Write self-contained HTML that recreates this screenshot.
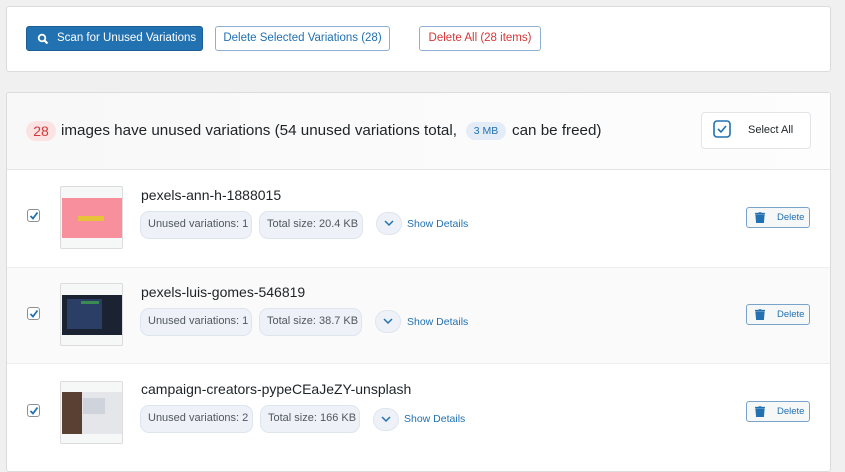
<!DOCTYPE html>
<html><head><meta charset="utf-8"><style>
*{box-sizing:border-box;margin:0;padding:0}
body{width:845px;height:461px;background:#f0f0f1;font-family:"Liberation Sans",sans-serif;position:relative;overflow:hidden;color:#1d2327}
div{white-space:nowrap}
.a{position:absolute}
.panel{background:#fff;border:1px solid #dcdcde;border-radius:3px}
.btn{position:absolute;height:25px;border-radius:3px;font-size:11.5px;line-height:23px;text-align:center}
.pill{position:absolute;height:28px;background:#eef2f8;border:1px solid #dde5ef;border-radius:9px;font-size:11px;color:#50575e;line-height:24px;padding:0 7px}
.chev{position:absolute;width:26px;height:23px;border-radius:12px;background:#eef2f8;border:1px solid #dde5ef}
.sd{position:absolute;font-size:10.5px;color:#2271b1}
.cb{position:absolute;width:13px;height:13px;border:1px solid #8c8f94;border-radius:3px;background:#fff}
.thumb{position:absolute;width:63px;height:63px;background:#f6f7f7;border:1px solid #dcdcde;border-radius:2px}
.title{position:absolute;font-size:14px;color:#1d2327}
.del{position:absolute;width:64px;height:21px;border:1px solid #7aa3cc;border-radius:3px;background:#f6f7f7;font-size:9.5px;color:#2271b1;line-height:20px;padding-left:30px}
</style></head><body>
<div class="a panel" style="left:6px;top:6px;width:825px;height:66px"></div>
<div class="btn" style="left:26px;top:26px;width:177px;background:#2271b1;color:#fff;border:1px solid #1c5f97">
<svg style="position:absolute;left:10px;top:6px" width="12" height="12" viewBox="0 0 12 12"><circle cx="5" cy="5" r="3.3" fill="none" stroke="#fff" stroke-width="1.8"/><path d="M7.3 7.3L10.5 10.5" stroke="#fff" stroke-width="2.2"/></svg>
<span style="position:absolute;left:30px;font-size:11.5px">Scan for Unused Variations</span></div>
<div class="btn" style="left:215px;top:26px;width:175px;border:1px solid #8fb0d3;color:#2271b1;background:#fff;font-size:11.5px">Delete Selected Variations (28)</div>
<div class="btn" style="left:419px;top:26px;width:122px;border:1px solid #8fb0d3;color:#d63638;background:#fff;font-size:11.5px">Delete All (28 items)</div>

<div class="a panel" style="left:6px;top:92px;width:825px;height:380px;overflow:hidden">
<div class="a" style="left:0;top:0;width:825px;height:77px;background:linear-gradient(90deg,#f8f8f8,#fdfdfd);border-bottom:1px solid #e5e5e5"></div>
<div class="a" style="left:0;top:174px;width:825px;height:97px;background:#fafafa;border-top:1px solid #eee;border-bottom:1px solid #eee"></div>
</div>
<div class="a" style="left:26px;top:121px;height:20px;width:30px;background:#fbe3e3;border-radius:10px;color:#d63638;font-size:14px;line-height:20px;text-align:center">28</div>
<div class="a" style="left:61px;top:121px;font-size:15.2px;line-height:20px">images have unused variations (54 unused variations total,</div>
<div class="a" style="left:466px;top:122px;height:18px;width:40px;background:#e4edf7;border-radius:9px;color:#2271b1;font-size:10.5px;line-height:18px;text-align:center">3 MB</div>
<div class="a" style="left:512px;top:121px;font-size:15.2px;line-height:20px">can be freed)</div>
<div class="a" style="left:701px;top:112px;width:110px;height:37px;background:#fff;border:1px solid #e2e4e7;border-radius:4px"></div>
<svg class="a" style="left:713px;top:120px" width="18" height="18" viewBox="0 0 18 18"><rect x="1" y="1" width="16" height="16" rx="3" fill="none" stroke="#2271b1" stroke-width="1.6"/><path d="M5 9l3 3 5-6" fill="none" stroke="#2271b1" stroke-width="1.6"/></svg>
<div class="a" style="left:748px;top:124px;font-size:11px">Select All</div>

<div class="cb" style="left:27px;top:209px"></div><svg class="a" style="left:29px;top:211px" width="10" height="10"><path d="M1.5 5l2.5 2.5 4.5-6" fill="none" stroke="#2271b1" stroke-width="1.8"/></svg>
<div class="thumb" style="left:60px;top:186px"><div class="a" style="left:1px;top:11px;width:60px;height:40px;background:#f7909c"></div><div class="a" style="left:17px;top:29px;width:26px;height:5px;background:#e6c23a"></div></div>
<div class="title" style="left:141px;top:187px">pexels-ann-h-1888015</div>
<div class="pill" style="left:140px;top:211px;width:112px">Unused variations: 1</div>
<div class="pill" style="left:259px;top:211px;width:104px">Total size: 20.4 KB</div>
<div class="chev" style="left:376px;top:212px"></div><svg class="a" style="left:384px;top:219px" width="10" height="8"><path d="M1 2l4 4 4-4" fill="none" stroke="#2271b1" stroke-width="1.5"/></svg>
<div class="sd" style="left:407px;top:218px">Show Details</div>
<div class="del" style="left:746px;top:207px">Delete</div>
<svg class="a" style="left:755px;top:212px" width="10" height="11"><path d="M0 1.5h10M3.5 0h3M1 3h8l-.7 8H1.7z" stroke="#2271b1" fill="#2271b1" stroke-width="1.2"/></svg>

<div class="cb" style="left:27px;top:307px"></div><svg class="a" style="left:29px;top:309px" width="10" height="10"><path d="M1.5 5l2.5 2.5 4.5-6" fill="none" stroke="#2271b1" stroke-width="1.8"/></svg>
<div class="thumb" style="left:60px;top:283px"><div class="a" style="left:1px;top:11px;width:60px;height:40px;background:#1b2231"></div><div class="a" style="left:6px;top:15px;width:35px;height:30px;background:#2b3f66"></div><div class="a" style="left:20px;top:17px;width:18px;height:3px;background:#3a8a52"></div></div>
<div class="title" style="left:141px;top:284px">pexels-luis-gomes-546819</div>
<div class="pill" style="left:140px;top:308px;width:112px">Unused variations: 1</div>
<div class="pill" style="left:259px;top:308px;width:103px">Total size: 38.7 KB</div>
<div class="chev" style="left:375px;top:310px"></div><svg class="a" style="left:383px;top:317px" width="10" height="8"><path d="M1 2l4 4 4-4" fill="none" stroke="#2271b1" stroke-width="1.5"/></svg>
<div class="sd" style="left:407px;top:316px">Show Details</div>
<div class="del" style="left:746px;top:304px">Delete</div>
<svg class="a" style="left:755px;top:309px" width="10" height="11"><path d="M0 1.5h10M3.5 0h3M1 3h8l-.7 8H1.7z" stroke="#2271b1" fill="#2271b1" stroke-width="1.2"/></svg>

<div class="cb" style="left:27px;top:404px"></div><svg class="a" style="left:29px;top:406px" width="10" height="10"><path d="M1.5 5l2.5 2.5 4.5-6" fill="none" stroke="#2271b1" stroke-width="1.8"/></svg>
<div class="thumb" style="left:60px;top:381px"><div class="a" style="left:1px;top:10px;width:60px;height:42px;background:#e4e6ea"></div><div class="a" style="left:1px;top:10px;width:20px;height:42px;background:#5a3f33"></div><div class="a" style="left:22px;top:16px;width:22px;height:16px;background:#cfd4dc"></div></div>
<div class="title" style="left:141px;top:381px">campaign-creators-pypeCEaJeZY-unsplash</div>
<div class="pill" style="left:140px;top:405px;width:113px">Unused variations: 2</div>
<div class="pill" style="left:260px;top:405px;width:100px">Total size: 166 KB</div>
<div class="chev" style="left:373px;top:408px"></div><svg class="a" style="left:381px;top:415px" width="10" height="8"><path d="M1 2l4 4 4-4" fill="none" stroke="#2271b1" stroke-width="1.5"/></svg>
<div class="sd" style="left:404px;top:413px">Show Details</div>
<div class="del" style="left:746px;top:401px">Delete</div>
<svg class="a" style="left:755px;top:406px" width="10" height="11"><path d="M0 1.5h10M3.5 0h3M1 3h8l-.7 8H1.7z" stroke="#2271b1" fill="#2271b1" stroke-width="1.2"/></svg>
</body></html>
